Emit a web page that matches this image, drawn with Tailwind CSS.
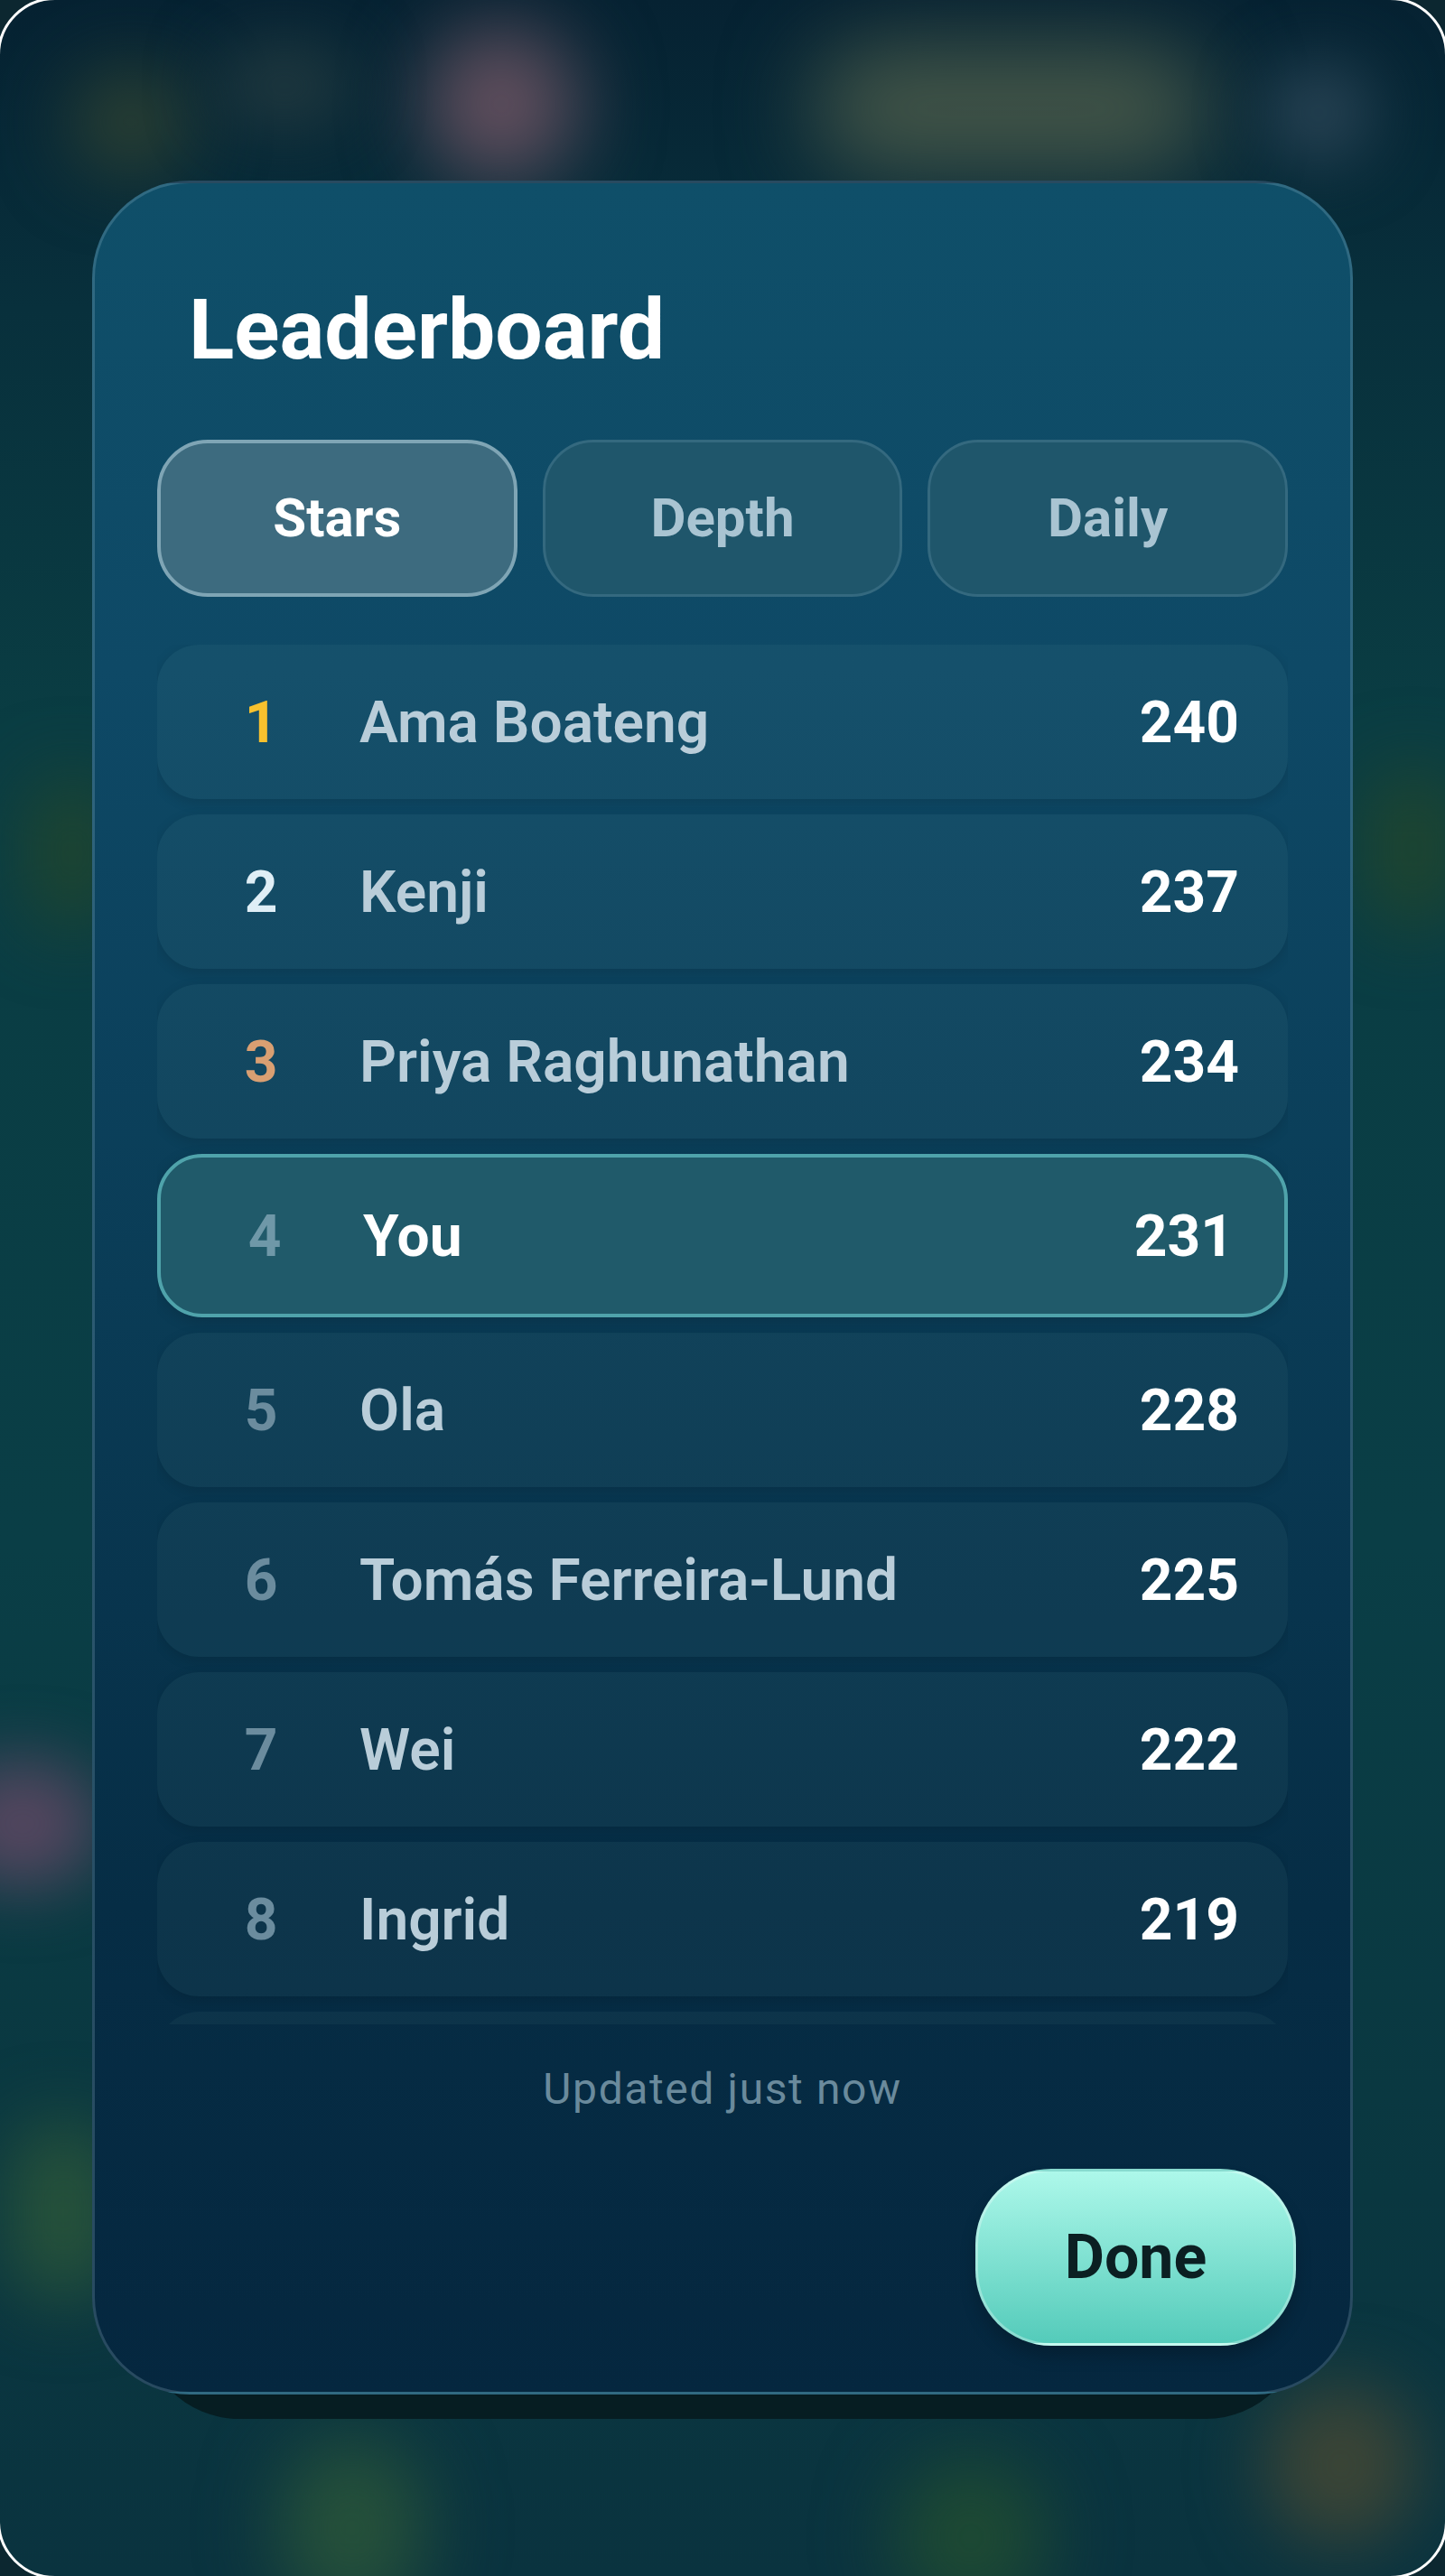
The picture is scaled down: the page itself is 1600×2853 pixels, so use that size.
<!DOCTYPE html>
<html lang="en">
<head>
    <meta charset="UTF-8">
    <meta name="viewport" content="width=device-width, initial-scale=1.0">
    <title>Leaderboard</title>
    <script src="https://cdn.jsdelivr.net/npm/@tailwindcss/browser@4"></script>
</head>
<body class="bg-[#0c2730] [font-family:Roboto,sans-serif]">
    <div class="relative w-[1600px] h-[2853px] overflow-hidden">
        <div class="relative w-full h-full overflow-hidden rounded-[60px] bg-[linear-gradient(180deg,#062232_0%,#08303c_12%,#0a3d43_28%,#0a3e46_60%,#0a3740_85%,#0a333f_100%)]">
            <!-- blurred game board behind the sheet -->
            <div class="absolute left-[470px] top-[30px] w-[170px] h-[170px] rounded-full bg-[#64505f] blur-[45px]"></div>
            <div class="absolute left-[80px] top-[80px] w-[130px] h-[110px] rounded-full bg-[#2f4232] blur-[42px]"></div>
            <div class="absolute left-[240px] top-[50px] w-[150px] h-[90px] rounded-full bg-[#21393f] blur-[38px]"></div>
            <div class="absolute left-[900px] top-[50px] w-[440px] h-[140px] rounded-full bg-[#445648] blur-[50px]"></div>
            <div class="absolute left-[1400px] top-[70px] w-[120px] h-[110px] rounded-full bg-[#284354] blur-[36px]"></div>
            <div class="absolute left-[30px] top-[860px] w-[100px] h-[170px] rounded-full bg-[#1f452f] blur-[40px]"></div>
            <div class="absolute left-[1510px] top-[850px] w-[110px] h-[180px] rounded-full bg-[#1f452f] blur-[40px]"></div>
            <div class="absolute left-[-60px] top-[1950px] w-[170px] h-[140px] rounded-full bg-[#54465f] blur-[36px]"></div>
            <div class="absolute left-[10px] top-[2350px] w-[120px] h-[200px] rounded-full bg-[#28533a] blur-[40px]"></div>
            <div class="absolute left-[310px] top-[2700px] w-[160px] h-[200px] rounded-full bg-[#26513a] blur-[42px]"></div>
            <div class="absolute left-[990px] top-[2720px] w-[170px] h-[180px] rounded-full bg-[#1e4a33] blur-[42px]"></div>
            <div class="absolute left-[1400px] top-[2640px] w-[170px] h-[180px] rounded-full bg-[#3c4536] blur-[40px]"></div>

            <!-- hard shadow under the sheet -->
            <div class="absolute left-[157px] top-[2400px] w-[1286px] h-[279px] rounded-[108px] bg-[#061d22]"></div>

            <main class="relative ml-[102px] mt-[200px] w-[1396px] h-[2452px] flex flex-col rounded-[108px] border-[3px] border-[#b4d7e6]/20 px-[69px] bg-[linear-gradient(180deg,#0f4f69_0%,#0e4966_22%,#0a3c56_50%,#062d45_78%,#05273f_100%)]">
                <h1 class="mt-[113px] ml-[35px] text-[93px] leading-[100px] font-bold text-white">Leaderboard</h1>

                <div class="mt-[71px] grid grid-cols-3 gap-[28px]">
                    <button class="h-[174px] rounded-[56px] border-4 border-[#7fa5b5] bg-[#3d6b7f] text-[60px] font-bold text-white">Stars</button>
                    <button class="h-[174px] rounded-[56px] border-[3px] border-[#34697f] bg-[#1f566b] text-[60px] font-bold text-[#a9c4d2]">Depth</button>
                    <button class="h-[174px] rounded-[56px] border-[3px] border-[#34697f] bg-[#1f566b] text-[60px] font-bold text-[#a9c4d2]">Daily</button>
                </div>

                <ul class="mt-[53px] h-[1528px] overflow-hidden flex flex-col gap-[17px] text-[64px]">
                    <li class="h-[171px] shrink-0 flex items-center rounded-[46px] bg-[#d8ffe8]/[0.04] pt-[3px] pl-[75px] pr-[54px] shadow-[0_4px_14px_rgba(0,0,0,0.12)]">
                        <span class="w-[80px] text-center font-bold text-[#f7c12e]">1</span>
                        <span class="ml-[69px] flex-1 font-semibold text-[#b9cdd9]">Ama Boateng</span>
                        <span class="font-bold text-white">240</span>
                    </li>
                    <li class="h-[171px] shrink-0 flex items-center rounded-[46px] bg-[#d8ffe8]/[0.04] pt-[3px] pl-[75px] pr-[54px] shadow-[0_4px_14px_rgba(0,0,0,0.12)]">
                        <span class="w-[80px] text-center font-bold text-[#dfeef6]">2</span>
                        <span class="ml-[69px] flex-1 font-semibold text-[#b9cdd9]">Kenji</span>
                        <span class="font-bold text-white">237</span>
                    </li>
                    <li class="h-[171px] shrink-0 flex items-center rounded-[46px] bg-[#d8ffe8]/[0.04] pt-[3px] pl-[75px] pr-[54px] shadow-[0_4px_14px_rgba(0,0,0,0.12)]">
                        <span class="w-[80px] text-center font-bold text-[#d99f72]">3</span>
                        <span class="ml-[69px] flex-1 font-semibold text-[#b9cdd9]">Priya Raghunathan</span>
                        <span class="font-bold text-white">234</span>
                    </li>
                    <li class="h-[181px] shrink-0 flex items-center rounded-[50px] border-4 border-[#4fa3ab] bg-[#205a6a] pt-[3px] pl-[75px] pr-[56px] shadow-[0_4px_16px_rgba(0,0,0,0.15)]">
                        <span class="w-[80px] text-center font-bold text-[#6f98a8]">4</span>
                        <span class="ml-[69px] flex-1 font-bold text-white">You</span>
                        <span class="font-bold text-white">231</span>
                    </li>
                    <li class="h-[171px] shrink-0 flex items-center rounded-[46px] bg-[#d8ffe8]/[0.04] pt-[3px] pl-[75px] pr-[54px] shadow-[0_4px_14px_rgba(0,0,0,0.12)]">
                        <span class="w-[80px] text-center font-bold text-[#6b8c9e]">5</span>
                        <span class="ml-[69px] flex-1 font-semibold text-[#b9cdd9]">Ola</span>
                        <span class="font-bold text-white">228</span>
                    </li>
                    <li class="h-[171px] shrink-0 flex items-center rounded-[46px] bg-[#d8ffe8]/[0.04] pt-[3px] pl-[75px] pr-[54px] shadow-[0_4px_14px_rgba(0,0,0,0.12)]">
                        <span class="w-[80px] text-center font-bold text-[#6b8c9e]">6</span>
                        <span class="ml-[69px] flex-1 font-semibold text-[#b9cdd9]">Tomás Ferreira-Lund</span>
                        <span class="font-bold text-white">225</span>
                    </li>
                    <li class="h-[171px] shrink-0 flex items-center rounded-[46px] bg-[#d8ffe8]/[0.04] pt-[3px] pl-[75px] pr-[54px] shadow-[0_4px_14px_rgba(0,0,0,0.12)]">
                        <span class="w-[80px] text-center font-bold text-[#6b8c9e]">7</span>
                        <span class="ml-[69px] flex-1 font-semibold text-[#b9cdd9]">Wei</span>
                        <span class="font-bold text-white">222</span>
                    </li>
                    <li class="h-[171px] shrink-0 flex items-center rounded-[46px] bg-[#d8ffe8]/[0.04] pt-[3px] pl-[75px] pr-[54px] shadow-[0_4px_14px_rgba(0,0,0,0.12)]">
                        <span class="w-[80px] text-center font-bold text-[#6b8c9e]">8</span>
                        <span class="ml-[69px] flex-1 font-semibold text-[#b9cdd9]">Ingrid</span>
                        <span class="font-bold text-white">219</span>
                    </li>
                    <li class="h-[171px] shrink-0 rounded-[46px] bg-[#d8ffe8]/[0.04]"></li>
                </ul>

                <p class="mt-[44px] text-center text-[48px] leading-[56px] tracking-[1.6px] text-[#6a8a9c]">Updated just now</p>

                <button class="self-end mt-[60px] -mr-[9px] w-[355px] h-[196px] rounded-[84px] border-[3px] border-white/30 bg-[linear-gradient(180deg,#adf8ea_0%,#54cbba_100%)] text-[68px] font-bold text-[#0b1f22] shadow-[0_12px_18px_rgba(0,0,0,0.2)]">Done</button>
            </main>
        </div>

        <!-- white rim: its straight sides sit just outside the window, only the corners show -->
        <div class="absolute -inset-[3px] rounded-[64px] border-[3px] border-white pointer-events-none"></div>
    </div>
</body>
</html>
